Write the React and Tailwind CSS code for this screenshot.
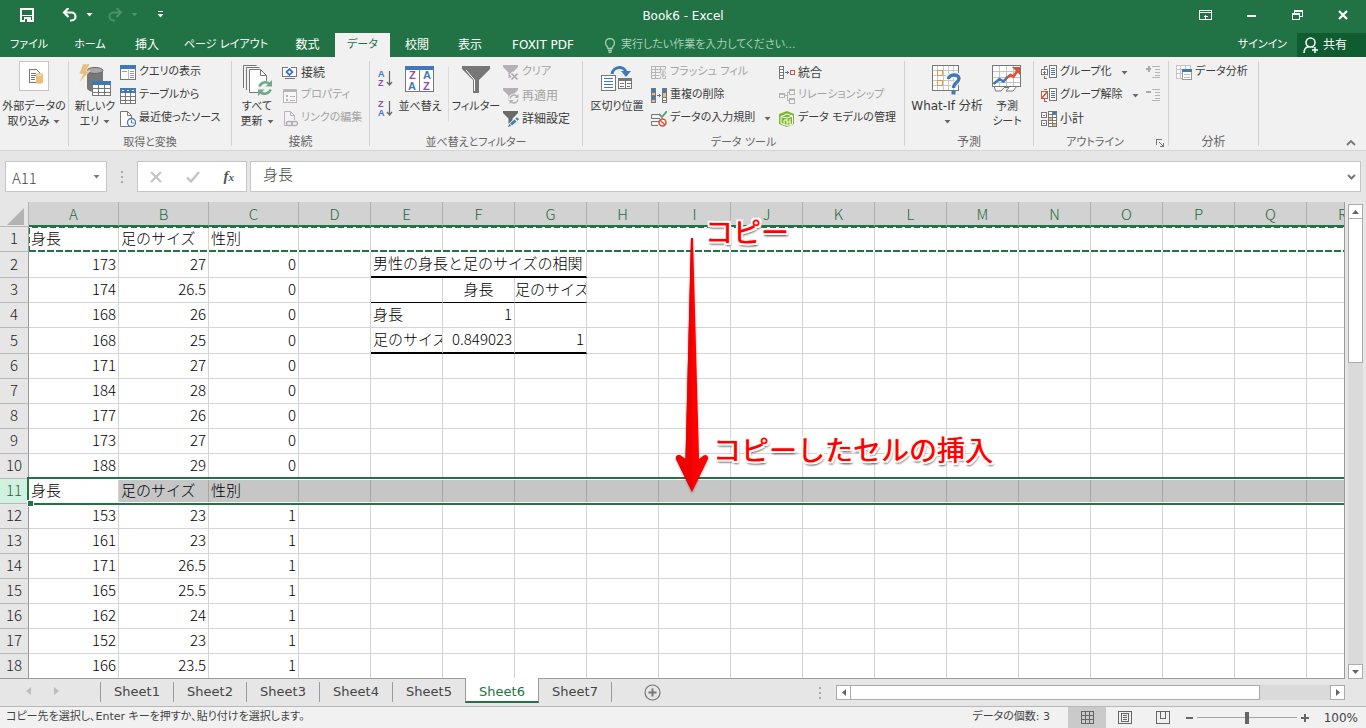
import React from "react";

const UI = "font-['DejaVu_Sans','Noto_Sans_CJK_JP',sans-serif] [font-feature-settings:'palt']";
const GRID = "font-['Noto_Sans_CJK_JP',sans-serif] [font-feature-settings:normal]";

const G = "#777777";
const B = "#4179b8";
const O = "#e9bd7b";
const P = "#8c4fb0";
const R = "#d9513a";

/* Labels with kana are set one step smaller than plain kanji or Latin ones. */
const sizeOf = (text) => (/[\u3041-\u30ff]/.test(text) ? "text-[11px]" : "text-xs");

function Svg({ w = 16, h = 16, crisp = true, children }) {
  return (
    <svg width={w} height={h} viewBox={`0 0 ${w} ${h}`} fill="none" shapeRendering={crisp ? "crispEdges" : "auto"} className="shrink-0" aria-hidden="true">
      {children}
    </svg>
  );
}

function Caret({ color = "#666666" }) {
  return (
    <svg width="7" height="4" viewBox="0 0 7 4" className="shrink-0" aria-hidden="true">
      <path d="M0.5 0h6L3.5 3.5z" fill={color} />
    </svg>
  );
}

/* ---------- ribbon icons ---------- */

const ExternalData = () => (
  <Svg w={30} h={30}>
    <path d="M0.5 0.5h29v29h-29z" fill="#fff" stroke="#c6c6c6" />
    <path d="M10.5 8.5h7l3 3v10h-10z" fill="#fff" stroke={G} />
    <path d="M12 12h5M12 14h5M12 16h4M12 18h4" stroke={G} transform="translate(0 .5)" />
    <g shapeRendering="auto">
      <path d="M17 14v7c0 1 1.600 1.800 3.500 1.800S24 22 24 21v-7z" fill={O} />
      <ellipse cx="20.500" cy="14" rx="3.500" ry="1.500" fill="#f4dcb4" stroke={O} />
    </g>
  </Svg>
);

const NewQuery = () => (
  <Svg w={34} h={33} crisp={false}>
    <path d="M9 6v18c0 2.200 3.500 4 8 4h8V6z" fill="#777" />
    <ellipse cx="17" cy="6.500" rx="8" ry="3" fill="#a9a9a9" stroke="#666" />
    <path d="M5 0h7L8 7h4L1 19l4-9H1z" fill={O} stroke="#f1f1f1" strokeWidth="0.600" />
    <g shapeRendering="crispEdges">
      <path d="M14.500 17.500h18v14h-18z" fill="#fff" stroke={G} />
      <path d="M14 17h19v4H14z" fill={B} />
      <path d="M14 24.500h19M14 28.500h19M20.500 21v10M26.500 21v10" stroke={G} />
    </g>
  </Svg>
);

const ShowQueries = () => (
  <Svg>
    <path d="M0.500 0.500h15v14h-15z" fill="#fff" stroke={G} />
    <path d="M0 0h16v4H0z" fill={B} />
    <path d="M10 6.500h4M10 8.500h4M10 10.500h4M10 12.500h4M2 6.500h5" stroke="#999" />
    <path d="M8.500 5v9" stroke="#bbb" />
  </Svg>
);

const FromTable = () => (
  <Svg>
    <path d="M0.500 0.500h15v15h-15z" fill="#fff" stroke={G} />
    <path d="M0 0h16v5H0z" fill={B} />
    <path d="M2 2.500h2M7 2.500h2M12 2.500h2" stroke="#fff" />
    <path d="M0 8.500h16M0 12.500h16M5.500 5v11M10.500 5v11" stroke={G} />
  </Svg>
);

const RecentSources = () => (
  <Svg crisp={false}>
    <path d="M0.500 0.500h7l4 4v11h-11z" fill="#fff" stroke={G} />
    <path d="M7.500 0.500v4h4" stroke={G} />
    <circle cx="11.500" cy="11.500" r="4" fill="#fff" stroke={B} strokeWidth="1.300" />
    <path d="M11.500 9v3h2.500" stroke={G} />
  </Svg>
);

const RefreshAll = () => (
  <Svg w={32} h={33} crisp={false}>
    <path d="M2.500 24V1.500h13M5.500 26V3.500h13" stroke={G} />
    <path d="M8.500 5.500h11l6 6v17h-17z" fill="#fff" stroke={G} />
    <path d="M19.500 5.500v6h6" stroke={G} />
    <circle cx="24" cy="24" r="7.500" fill="#f1f1f1" />
    <path d="M18.500 22.500a6 6 0 0 1 10-2.500M29.500 25.500a6 6 0 0 1-10 2.500" stroke="#6fa98a" strokeWidth="2.600" />
    <path d="M31 16v6.500h-6.500zM17 32v-6.500h6.500z" fill="#6fa98a" />
  </Svg>
);

const Connections = () => (
  <Svg>
    <path d="M0.500 2.500h14v9h-14z" fill="#fff" stroke={G} />
    <path d="M3 13.500h10" stroke={G} />
    <path d="M4 4l3.500-3 3.500 3v6H4z" fill="#fff" />
    <path d="M7.500 4l3 3-3 3-3-3z" stroke={B} strokeWidth="1.800" shapeRendering="auto" />
  </Svg>
);

const Properties = () => (
  <Svg>
    <path d="M1.500 1.500h13v13h-13z" fill="#f7f7f7" stroke="#b9b4ba" />
    <path d="M1 1h14v3H1z" fill="#b9b4ba" />
    <path d="M4 7h2v2H4zM4 11h2v2H4z" fill="#b9b4ba" />
    <path d="M8 8.500h5M8 12.500h5" stroke="#b9b4ba" />
  </Svg>
);

const EditLinks = () => (
  <Svg crisp={false}>
    <path d="M7 14.500H2.500v-14h6l4 4V9" fill="#f4f0f5" stroke="#b9b4ba" />
    <path d="M8.500 0.500v4h4" stroke="#b9b4ba" />
    <rect x="4.500" y="10.500" width="6" height="4" rx="2" stroke="#b0b0b0" strokeWidth="1.400" />
    <rect x="9.500" y="10.500" width="6" height="4" rx="2" stroke="#b0b0b0" strokeWidth="1.400" />
  </Svg>
);

function SortIcon({ top, bottom, topColor, bottomColor }) {
  return (
    <Svg w={16} h={18} crisp={false}>
      <g className="font-['Liberation_Sans',sans-serif] text-[9px] font-bold">
        <text x="0" y="8" fill={topColor}>{top}</text>
        <text x="0" y="17" fill={bottomColor}>{bottom}</text>
      </g>
      <path d="M11.500 2v14M9 13l2.500 3 2.500-3" stroke="#666" strokeWidth="1.200" />
    </Svg>
  );
}

const SortBig = () => (
  <Svg w={30} h={28}>
    <path d="M0.500 0.500h28v25h-28z" fill="#fff" stroke={G} />
    <path d="M0 0h29v4H0z" fill={B} />
    <path d="M14.500 4v22" stroke={G} />
    <g className="font-['Liberation_Sans',sans-serif] text-[11px] font-bold">
      <text x="4" y="13" fill={P}>Z</text>
      <text x="3" y="24" fill={B}>A</text>
      <text x="18" y="13" fill={B}>A</text>
      <text x="18" y="24" fill={P}>Z</text>
    </g>
  </Svg>
);

const Funnel = () => (
  <Svg w={28} h={28} crisp={false}>
    <path d="M0 0h28v3L17 14v13h-6V14L0 3z" fill={G} />
    <path d="M12.500 25V14L4 4" stroke="#fff" strokeWidth="1" />
  </Svg>
);

const SmallFunnel = ({ color }) => <path d="M0 0h15v2L9.500 7.500V13h-4V7.500L0 2z" fill={color} />;

const ClearFilter = () => (
  <Svg crisp={false}>
    <SmallFunnel color="#b5b0b5" />
    <path d="M8 8l7 7M15 8l-7 7" stroke="#f1f1f1" strokeWidth="4" />
    <path d="M8.500 8.500l6 6M14.500 8.500l-6 6" stroke="#aaa" strokeWidth="1.600" />
  </Svg>
);

const Reapply = () => (
  <Svg crisp={false}>
    <SmallFunnel color="#b5b0b5" />
    <circle cx="11" cy="11" r="5.500" fill="#f1f1f1" />
    <path d="M7 10.500a4 4 0 0 1 7-2M15 11.500a4 4 0 0 1-7 2" stroke="#b0b0b0" strokeWidth="1.500" />
    <path d="M15.500 6v4h-4zM6.500 16v-4h4z" fill="#b0b0b0" />
  </Svg>
);

const Advanced = () => (
  <Svg crisp={false}>
    <SmallFunnel color="#6a6a6a" />
    <path d="M5 16.500L15.500 7" stroke="#f1f1f1" strokeWidth="5" />
    <path d="M7 12.500l4.500-4 2 2-4.500 4z" fill={B} />
    <path d="M12.500 7.700l1.500-1.400 2 2-1.500 1.500z" fill={B} />
    <path d="M5 16l1.200-3 2 2z" fill={B} />
  </Svg>
);

const TextToColumns = () => (
  <Svg w={32} h={28} crisp={false}>
    <path d="M11 8c1-8 13-9 14-1" stroke={B} strokeWidth="3" />
    <path d="M20 5h10l-5 6z" fill={B} />
    <g shapeRendering="crispEdges">
      <path d="M0.500 9.500h14v15h-14z" fill="#fff" stroke={G} />
      <path d="M3 12.500h9M3 15.500h9M3 18.500h9M3 21.500h9" stroke={B} />
      <path d="M17.500 12.500h13v10h-13z" fill="#fff" stroke={G} />
      <path d="M17 12h14v3H17z" fill={G} />
      <path d="M24.500 12v11M19 17.500h4M19 20.500h4M26 17.500h4M26 20.500h3" stroke={G} />
    </g>
  </Svg>
);

const FlashFill = () => (
  <Svg>
    <path d="M0.500 1.500h14v12h-14zM0 4.500h15M0 7.500h15M0 10.500h15M4.500 1v13M9.500 1v13" stroke="#b5b5b5" />
    <path d="M11 5h4l-2 4h3l-7 7 2-5H9z" fill="#c4c4c4" stroke="#f1f1f1" shapeRendering="auto" />
  </Svg>
);

const RemoveDuplicates = () => (
  <Svg>
    <path d="M0.500 0.500h4v14h-4z" fill={O} stroke={G} />
    <path d="M1 1h3v3H1zM1 8h3v3H1z" fill={B} />
    <path d="M11.500 0.500h4v14h-4z" fill="#fff" stroke={G} />
    <path d="M12 1h3v4h-3z" fill={B} />
    <path d="M12 5h3v4h-3z" fill={O} />
    <path d="M11 9.500h5M11 12.500h5M0 4.500h5M0 7.500h5M0 11.500h5" stroke={G} />
    <path d="M6 7.500h4M8.500 6v3" stroke={B} />
  </Svg>
);

const Validation = () => (
  <Svg crisp={false}>
    <path d="M9 3.500H0.500v4H9M9 10.500H0.500v4H7" stroke={G} />
    <path d="M8 3l3 3 5-6" stroke="#5c9b79" strokeWidth="1.800" />
    <circle cx="11.500" cy="11.500" r="3.500" fill="#fff" stroke={R} strokeWidth="1.500" />
    <path d="M9 9l5 5" stroke={R} strokeWidth="1.400" />
  </Svg>
);

const Consolidate = () => (
  <Svg>
    <path d="M0.500 1.500h4v12h-4zM0 4.500h5M0 7.500h5M0 10.500h5" fill="#fff" stroke={G} />
    <path d="M6 7.500h4M8.500 6v3" stroke={B} />
    <path d="M11.500 5.500h4v4h-4z" fill="#fff" stroke={R} />
  </Svg>
);

const Relationships = () => (
  <Svg>
    <path d="M0.500 5.500h5v4h-5zM10.500 1.500h5v5h-5zM10.500 10.500h5v5h-5z" fill="#f5f5f5" stroke="#b5b5b5" />
    <path d="M10 1h6v2h-6zM10 10h6v2h-6zM0 5h6v2H0z" fill="#b5b5b5" />
    <path d="M6 7.500h2.500M10 4.500H8.500v8H10" stroke="#b5b5b5" />
  </Svg>
);

const DataModel = () => (
  <Svg crisp={false}>
    <path d="M0 3L8 0l7 3v10l-7 3-8-3z" fill="#7db72f" />
    <path d="M2 5.500L8 3l5.500 2v8l-5 1.500L2 12.500zM2 5.500L8 7l5.500-2M5 9v4M8 8v6M11 8v5M5 9h3M8 11h3" stroke="#fff" strokeWidth="1" />
  </Svg>
);

const WhatIf = () => (
  <Svg w={30} h={30} crisp={false}>
    <g shapeRendering="crispEdges">
      <path d="M0.500 0.500h26v25h-26z" fill="#fff" stroke={G} />
      <path d="M5.500 1v24M11.500 1v24M16.500 1v24M21.500 1v24M1 5.500h25M1 10.500h25M1 15.500h25M1 20.500h25" stroke="#c8c8c8" />
      <path d="M5.500 5.500h5v5h-5zM5.500 15.500h5v5h-5z" stroke="#df9a45" strokeWidth="1.500" fill="#fff" />
    </g>
    <path d="M16 13.500c0-4 11.500-5.500 11.500 0 0 4-5.500 3.500-5.500 9" stroke="#f1f1f1" strokeWidth="6" />
    <path d="M16.500 14c0-5 10.500-5.500 10.500-.5 0 4-5.500 4-5.500 9.500" stroke={B} strokeWidth="3.300" />
    <path d="M19.500 25.500h4v4h-4z" fill={B} />
  </Svg>
);

const Forecast = () => (
  <Svg w={30} h={30} crisp={false}>
    <path d="M2 20l1.500 6H9l3-3.500h5l-3 3.500h7l4-5" fill="#fff" stroke={G} />
    <g shapeRendering="crispEdges">
      <path d="M0.500 0.500h28v21h-28z" fill="#fff" stroke={G} />
      <path d="M7.500 1v20M14.500 1v20M21.500 1v20M1 6.500h27M1 12.500h27M1 17.500h27" stroke="#c4c4c4" />
    </g>
    <path d="M1.500 19l6-5 4 2.500 4-4.500" stroke={B} strokeWidth="2.600" />
    <path d="M14.500 13l4-3 3 1.500L26 5" stroke={R} strokeWidth="2.600" />
    <path d="M20 2h8v8z" fill={R} />
  </Svg>
);

const GroupIcon = () => (
  <Svg>
    <path d="M3 1.500h3M3.500 13.500H6M3.500 1v3M3.500 11v3" stroke={G} />
    <path d="M0.500 4.500h6v5h-6z" fill="#fff" stroke={G} />
    <path d="M2 7.500h3M3.500 6v3" stroke={G} />
    <path d="M8.500 0.500h7v12h-7z" fill="#fff" stroke={G} />
    <path d="M10 3.500h4M10 5.500h4M10 7.500h4M10 9.500h4" stroke={B} />
  </Svg>
);

const UngroupIcon = () => (
  <Svg>
    <path d="M3 1.500h3M3.500 13.500H6M3.500 11v3" stroke={G} />
    <path d="M0.500 3.500h6v7h-6z" fill="#fff" stroke={R} />
    <path d="M1 10l5-6" stroke={R} strokeWidth="1.500" shapeRendering="auto" />
    <path d="M8.500 0.500h7v12h-7z" fill="#fff" stroke={G} />
    <path d="M10 3.500h4M10 5.500h4M10 7.500h4M10 9.500h4" stroke={B} />
  </Svg>
);

const Subtotal = () => (
  <Svg>
    <path d="M0.500 1.500h5v5h-5zM0.500 9.500h5v5h-5z" fill="#fff" stroke={G} />
    <path d="M2 4.500h2M2 12.500h2" stroke={G} />
    <path d="M7.500 0.500h8v15h-8zM7 3.500h9M7 6.500h9M7 9.500h9M7 12.500h9M11.500 0v16" fill="#fff" stroke={G} />
    <path d="M8 7h3v2H8zM12 13h3v2h-3z" fill={O} />
    <path d="M12 1h3v2h-3z" fill={B} />
  </Svg>
);

const DetailIcon = ({ plus }) => (
  <Svg>
    <path d="M0 4h5" stroke="#aaa" strokeWidth="2" />
    {plus && <path d="M3 1v6" stroke="#aaa" strokeWidth="2" />}
    <path d="M6 1.500h8M9 4.500h5M9 7.500h5M9 10.500h5M6 12.500h8" stroke="#b5b5b5" />
  </Svg>
);

const Analysis = () => (
  <Svg>
    <path d="M0.500 0.500h14v13h-14zM0 4.500h15M0 8.500h7M4.500 0v14M9.500 0v5" fill="#fafafa" stroke="#c4c4c4" />
    <path d="M6.500 5.500h9v9h-9z" fill="#fff" stroke="#999" />
    <path d="M6 4h10v3H6z" fill={B} />
    <path d="M8 9.500h6M8 12.500h6" stroke="#bbb" />
  </Svg>
);

/* ---------- ribbon building blocks ---------- */

function Small({ icon, label, disabled, caret }) {
  return (
    <button type="button" disabled={disabled} className={`flex h-[23px] items-center gap-[3px] ${sizeOf(label)} ${disabled ? "text-[#a3a3a3]" : "text-[#3b3b3b]"}`}>
      {icon}
      <span>{label}</span>
      {caret && <span className="ml-1.5"><Caret /></span>}
    </button>
  );
}

function Big({ icon, lines, caret, width, align = "items-center" }) {
  return (
    <button type="button" className={`flex flex-col items-center text-[#3b3b3b] ${sizeOf(lines.join(""))} ${width}`}>
      <span className={`flex h-[38px] justify-center ${align}`}>{icon}</span>
      {lines.map((l, i) => (
        <span key={l} className="flex h-[15px] items-center gap-1 leading-[15px]">
          {l}
          {caret && i === lines.length - 1 && <Caret />}
        </span>
      ))}
    </button>
  );
}

function Group({ label = "", width, pad = "", children, launcher }) {
  return (
    <>
      <section className={`flex shrink-0 flex-col ${width}`}>
        <div className={`flex h-[74px] items-start ${pad}`}>{children}</div>
        <div className={`flex h-[15px] items-center justify-center text-[#666] ${sizeOf(label)}`}>
          <span className="flex-1 text-center leading-[15px]">{label}</span>
          {launcher}
        </div>
      </section>
      <div className="h-[85px] w-px shrink-0 bg-[#d2d2d2]" />
    </>
  );
}

function Ribbon() {
  return (
    <div className="flex h-[94px] shrink-0 items-start overflow-hidden border-b border-[#d5d5d5] bg-[#f1f1f1] pt-1 text-xs whitespace-nowrap">
      <Group width="w-[68px]">
        <Big width="w-full" align="items-start" icon={<ExternalData />} lines={["外部データの", "取り込み"]} caret />
      </Group>
      <Group label="取得と変換" width="w-[162px]" pad="pl-1 gap-[3px]">
        <Big width="w-11" icon={<NewQuery />} lines={["新しいク", "エリ"]} caret />
        <div>
          <Small icon={<ShowQueries />} label="クエリの表示" />
          <Small icon={<FromTable />} label="テーブルから" />
          <Small icon={<RecentSources />} label="最近使ったソース" />
        </div>
      </Group>
      <Group label="接続" width="w-[137px]" pad="pl-[3px] gap-[3px]">
        <Big width="w-11" icon={<RefreshAll />} lines={["すべて", "更新"]} caret />
        <div>
          <Small icon={<Connections />} label="接続" />
          <Small icon={<Properties />} label="プロパティ" disabled />
          <Small icon={<EditLinks />} label="リンクの編集" disabled />
        </div>
      </Group>
      <Group label="並べ替えとフィルター" width="w-[212px]" pad="pl-2">
        <div className="flex flex-col gap-3 pt-2">
          <button type="button" aria-label="昇順"><SortIcon top="A" bottom="Z" topColor={B} bottomColor={P} /></button>
          <button type="button" aria-label="降順"><SortIcon top="Z" bottom="A" topColor={P} bottomColor={B} /></button>
        </div>
        <Big width="w-[52px]" icon={<SortBig />} lines={["並べ替え"]} />
        <div className="mt-1.5 ml-0.5 h-[55px] w-px bg-[#dcdcdc]" />
        <Big width="w-[54px]" icon={<Funnel />} lines={["フィルター"]} />
        <div>
          <Small icon={<ClearFilter />} label="クリア" disabled />
          <Small icon={<Reapply />} label="再適用" disabled />
          <Small icon={<Advanced />} label="詳細設定" />
        </div>
      </Group>
      <Group label="データ ツール" width="w-[321px]" pad="pl-0.5 gap-0.5">
        <Big width="w-16" icon={<TextToColumns />} lines={["区切り位置"]} />
        <div className="w-[126px]">
          <Small icon={<FlashFill />} label="フラッシュ フィル" disabled />
          <Small icon={<RemoveDuplicates />} label="重複の削除" />
          <Small icon={<Validation />} label="データの入力規則" caret />
        </div>
        <div>
          <Small icon={<Consolidate />} label="統合" />
          <Small icon={<Relationships />} label="リレーションシップ" disabled />
          <Small icon={<DataModel />} label="データ モデルの管理" />
        </div>
      </Group>
      <Group label="予測" width="w-[128px]" pad="pl-0.5">
        <button type="button" className="flex w-20 flex-col items-center text-[#3b3b3b]">
          <span className="flex h-[38px] items-center"><WhatIf /></span>
          <span className="h-[15px] leading-[15px]">What-If 分析</span>
          <span className="flex h-[15px] items-center"><Caret /></span>
        </button>
        <Big width="w-10" icon={<Forecast />} lines={["予測", "シート"]} />
      </Group>
      <Group
        label="アウトライン"
        width="w-[134px]"
        pad="pl-[7px]"
        launcher={
          <button type="button" aria-label="アウトラインの設定" className="mr-1">
            <Svg w={8} h={8}><path d="M0.500 6V0.500H6M3 3l4 4M7.500 3.500v4h-4" stroke={G} /></Svg>
          </button>
        }
      >
        <div className="w-[105px]">
          <Small icon={<GroupIcon />} label="グループ化" caret />
          <Small icon={<UngroupIcon />} label="グループ解除" caret />
          <Small icon={<Subtotal />} label="小計" />
        </div>
        <div>
          <button type="button" aria-label="詳細データの表示" className="flex h-[23px] items-center"><DetailIcon plus /></button>
          <button type="button" aria-label="詳細を表示しない" className="flex h-[23px] items-center"><DetailIcon /></button>
        </div>
      </Group>
      <Group label="分析" width="w-[89px]" pad="pl-[7px]">
        <Small icon={<Analysis />} label="データ分析" />
      </Group>
      <button type="button" aria-label="リボンを折りたたむ" className="mr-2.5 ml-auto self-end pb-1">
        <Svg w={10} h={6} crisp={false}><path d="M1 5l4-4 4 4" stroke={G} strokeWidth="1.800" /></Svg>
      </button>
    </div>
  );
}

/* ---------- title and tabs ---------- */

function TitleBar() {
  const win = "flex w-[46px] items-center justify-center";
  return (
    <div className="relative flex h-[33px] shrink-0 items-stretch justify-between text-white">
      <div className="flex items-center pb-1 pl-5">
        <button type="button" aria-label="上書き保存" className="w-[42px]">
          <Svg w={14} h={14}>
            <path d="M1 1h12v12H1z" stroke="#fff" strokeWidth="2" />
            <path d="M1 7.500h12M4 9h6v4H4z" stroke="#fff" fill="#fff" />
            <path d="M5 11h2v3H5z" fill="#217346" />
          </Svg>
        </button>
        <button type="button" aria-label="元に戻す" className="flex w-[45px] items-center gap-2">
          <Svg w={16} h={14} crisp={false}>
            <path d="M3 4.500h6.500a4 4 0 0 1 0 8H8" stroke="#fff" strokeWidth="2.200" />
            <path d="M6.500 0L2 4.500 6.500 9" stroke="#fff" strokeWidth="2.200" />
          </Svg>
          <Caret color="#fff" />
        </button>
        <button type="button" aria-label="やり直し" disabled className="flex w-[50px] items-center gap-2">
          <Svg w={16} h={14} crisp={false}>
            <path d="M13 4.500H6.500a4 4 0 0 0 0 8H8M9.500 0L14 4.500 9.500 9" stroke="#4f9068" strokeWidth="2" />
          </Svg>
          <Caret color="#4f9068" />
        </button>
        <button type="button" aria-label="クイック アクセス ツール バーのカスタマイズ">
          <Svg w={7} h={7} crisp={false}><path d="M1 .5h5" stroke="#fff" /><path d="M0.500 3h6l-3 3.500z" fill="#fff" /></Svg>
        </button>
      </div>
      <h1 className="absolute inset-x-0 top-2 text-center text-xs leading-4">Book6 - Excel</h1>
      <div className="flex pb-1">
        <button type="button" aria-label="リボンの表示オプション" className={win}>
          <Svg w={13} h={10}><path d="M0.500 0.500h12v9h-12zM0 2.500h13M6.500 9V5M4.500 6.500h4" stroke="#fff" /></Svg>
        </button>
        <button type="button" aria-label="最小化" className={win}>
          <Svg w={9} h={10}><path d="M0 6h9" stroke="#fff" strokeWidth="2" /></Svg>
        </button>
        <button type="button" aria-label="元に戻す (縮小)" className={win}>
          <Svg w={11} h={10}><path d="M2.500 3V0.500h8v6H8M0.500 4.500h7v5h-7zM0 3.500h8M2 1.500h9" stroke="#fff" /></Svg>
        </button>
        <button type="button" aria-label="閉じる" className={win}>
          <Svg w={10} h={10} crisp={false}><path d="M1 1l8 8M9 1l-8 8" stroke="#fff" strokeWidth="2.200" /></Svg>
        </button>
      </div>
    </div>
  );
}

const TABS = [
  ["ファイル", "w-[58px]"],
  ["ホーム", "w-16"],
  ["挿入", "w-[50px]"],
  ["ページ レイアウト", "w-[108px]"],
  ["数式", "w-[55px]"],
  ["データ", "w-[55px]"],
  ["校閲", "w-[54px]"],
  ["表示", "w-[52px]"],
  ["FOXIT PDF", "w-[94px]"],
];

function TabBar() {
  return (
    <nav className="flex h-6 shrink-0 items-stretch text-xs whitespace-nowrap text-white">
      {TABS.map(([t, w]) => (
        <button key={t} type="button" className={`${w} ${sizeOf(t)} ${t === "データ" ? "bg-[#f1f1f1] text-[#217346]" : ""}`}>
          {t}
        </button>
      ))}
      <label className="flex items-center gap-[5px] pl-3.5 text-[#a9cfb9]">
        <Svg w={12} h={15} crisp={false}>
          <path d="M4 10.500C4 8.500 1.500 7.500 1.500 5a4.500 4.500 0 0 1 9 0c0 2.500-2.500 3.500-2.500 5.500zM4 12.500h4M4.500 14.500h3" stroke="#a9cfb9" strokeWidth="1.300" />
        </Svg>
        <input aria-label="操作アシスト" placeholder="実行したい作業を入力してください..." className="w-52 bg-transparent text-[11px] outline-none placeholder:text-[#a9cfb9]" />
      </label>
      <button type="button" className="mr-2.5 ml-auto text-[11px]">サインイン</button>
      <button type="button" className="flex w-[69px] items-center gap-1 bg-[#0e5c2f] pl-1.5">
        <Svg w={16} h={16} crisp={false}>
          <circle cx="7.500" cy="5.500" r="4.500" stroke="#fff" strokeWidth="1.500" />
          <path d="M1 16c0-4 2-6 5-6.500M9 9.500l1.500 1M12 10v6M9 13h6" stroke="#fff" strokeWidth="1.500" />
        </Svg>
        共有
      </button>
    </nav>
  );
}

/* ---------- formula bar ---------- */

const Dots = () => (
  <Svg w={2} h={12}><path d="M0 0h2v2H0zM0 5h2v2H0zM0 10h2v2H0z" fill="#aaa" /></Svg>
);

function FormulaBar() {
  return (
    <div className="flex h-[51px] shrink-0 items-start px-[5px] pt-2.5 text-[#444]">
      <div className="flex h-[31px] w-[102px] items-center border border-[#c6c6c6] bg-white pr-1.5">
        <input aria-label="名前ボックス" defaultValue="A11" className={`w-0 flex-1 pt-1 pl-1.5 text-[15px] font-light outline-none ${GRID}`} />
        <button type="button" aria-label="名前の一覧"><Caret color="#777" /></button>
      </div>
      <div className="flex h-[31px] w-[30px] items-center justify-center"><Dots /></div>
      <div className="mr-[3px] flex h-[31px] w-[110px] items-center justify-around border border-[#c6c6c6] bg-white">
        <button type="button" aria-label="キャンセル" disabled>
          <Svg w={12} h={12} crisp={false}><path d="M1 1l10 10M11 1L1 11" stroke="#c4c4c4" strokeWidth="2" /></Svg>
        </button>
        <button type="button" aria-label="入力" disabled>
          <Svg w={14} h={12} crisp={false}><path d="M1 6.500l4 4L13 1" stroke="#c4c4c4" strokeWidth="2.400" /></Svg>
        </button>
        <button type="button" aria-label="関数の挿入" className="font-['Liberation_Serif',serif] text-[15px] leading-4 font-bold text-[#555] italic">
          f<span className="text-[11px]">x</span>
        </button>
      </div>
      <div className="flex h-[31px] flex-1 items-center border border-[#c6c6c6] bg-white pr-1">
        <input aria-label="数式バー" defaultValue="身長" className={`w-0 flex-1 pb-1 pl-3 text-[15px] font-light outline-none ${GRID}`} />
        <button type="button" aria-label="数式バーの展開">
          <Svg w={9} h={6} crisp={false}><path d="M1 1l3.500 3.500L8 1" stroke={G} strokeWidth="2" /></Svg>
        </button>
      </div>
    </div>
  );
}

/* ---------- sheet ---------- */

const COLS = "ABCDEFGHIJKLMNOPQR".split("");
const ROWS = [
  ["身長", "足のサイズ", "性別"],
  ["173", "27", "0"],
  ["174", "26.5", "0"],
  ["168", "26", "0"],
  ["168", "25", "0"],
  ["171", "27", "0"],
  ["184", "28", "0"],
  ["177", "26", "0"],
  ["173", "27", "0"],
  ["188", "29", "0"],
  ["身長", "足のサイズ", "性別"],
  ["153", "23", "1"],
  ["161", "23", "1"],
  ["171", "26.5", "1"],
  ["165", "25.5", "1"],
  ["162", "24", "1"],
  ["152", "23", "1"],
  ["166", "23.5", "1"],
];

const THICK = "border-b-2 border-b-black";
const THIN = "border-b border-b-black";
const EXTRA = {
  2: { E: { text: "男性の身長と足のサイズの相関", span: 3, cls: THICK }, F: null, G: null },
  3: { E: { cls: THIN }, F: { text: "身長", cls: `${THIN} text-center` }, G: { text: "足のサイズ", cls: THIN, pad: "px-0" } },
  4: { E: { text: "身長" }, F: { text: "1", cls: "text-right" } },
  5: { E: { text: "足のサイズ", cls: THICK }, F: { text: "0.849023", cls: `${THICK} text-right` }, G: { text: "1", cls: `${THICK} text-right` } },
};

function Cell({ row, col, index }) {
  const extra = EXTRA[row]?.[col];
  if (extra === null) return null;
  const selected = row === 11 && index > 0;
  const text = index < 3 ? ROWS[row - 1][index] : extra?.text;
  const numeric = index < 3 && row !== 1 && row !== 11;
  return (
    <td
      colSpan={extra?.span}
      className={`overflow-hidden border-r pb-0.5 leading-[22px] font-light whitespace-nowrap ${extra?.pad ?? "px-0.5"} ${
        selected ? "border-[#a6a6a6] bg-[#c6c6c6]" : "border-[#d4d4d4] bg-white"
      } ${extra?.cls?.includes("border-b") ? "" : "border-b"} ${numeric ? "text-right" : ""} ${extra?.cls ?? ""}`}
    >
      {text}
    </td>
  );
}

function Sheet() {
  return (
    <div className={`relative min-w-0 flex-1 overflow-hidden border-r border-b border-[#9b9b9b] text-[15px] text-black ${GRID}`}>
      <table className="w-[1379px] table-fixed border-separate border-spacing-0">
        <colgroup>
          <col className="w-[29px]" />
          {COLS.map((c, i) => <col key={c} className={i < 3 ? "w-[90px]" : "w-[72px]"} />)}
        </colgroup>
        <thead>
          <tr className="h-[25px]">
            <th className="border-r border-b border-[#b5b5b5] bg-[#e6e6e6] p-0" aria-label="すべて選択">
              <span className="flex justify-end pt-1 pr-1">
                <Svg w={17} h={17} crisp={false}><path d="M17 0v17H0z" fill="#b3b3b3" /></Svg>
              </span>
            </th>
            {COLS.map((c) => (
              <th key={c} className="border-r border-b-2 border-r-[#b0b0b0] border-b-[#217346] bg-[#d2d2d2] p-0 leading-[22px] font-light text-[#1f6a41]">
                {c}
              </th>
            ))}
          </tr>
        </thead>
        <tbody>
          {ROWS.map((_, r) => {
            const n = r + 1;
            return (
              <tr key={n} className={n === 2 || n === 5 ? "h-[26px]" : "h-[25px]"}>
                <th className={`border-r border-b border-r-[#9b9b9b] border-b-[#b8b8b8] p-0 pb-0.5 leading-[22px] font-light ${n === 11 ? "bg-[#d2f0e0] text-[#1f6a41]" : "bg-[#e6e6e6] text-[#222]"}`}>
                  {n}
                </th>
                {COLS.map((c, i) => <Cell key={c} row={n} col={c} index={i} />)}
              </tr>
            );
          })}
        </tbody>
      </table>

      {/* copy marquee around row 1 */}
      <div className="pointer-events-none absolute top-[25px] right-0 left-[29px] h-[25px]">
        <div className="h-px bg-[repeating-linear-gradient(90deg,#fff_0_3px,#217346_3px_9px)]" />
        <div className="h-[22px] w-px bg-[repeating-linear-gradient(180deg,#217346_0_6px,#fff_6px_9px)]" />
        <div className="h-0.5 bg-[repeating-linear-gradient(90deg,#217346_0_7px,#fff_7px_9px)]" />
      </div>

      {/* selected row outline and fill handle */}
      <div className="pointer-events-none absolute top-[275px] -right-1 left-[27px] h-7 border-2 border-[#217346]">
        <div className="h-full border-y border-white" />
        <div className="absolute -bottom-[3px] -left-px h-[5px] w-[5px] bg-[#217346] outline outline-white" />
      </div>

      {/* annotations */}
      <svg width="40" height="260" viewBox="0 0 40 260" className="pointer-events-none absolute top-[34px] left-[672px] drop-shadow-[0_1px_1px_rgba(0,0,0,0.35)]" aria-hidden="true">
        <path d="M19 2h2l6 221 4.500-3.500c3-2 6 1.500 4 4.500L20 256 4.500 224c-2-3 1-6.500 4-4.500L13.500 223z" fill="#ff0000" />
        <path d="M19 2h1v254L4.500 224c-2-3 1-6.500 4-4.500L13.500 223z" fill="#ee0000" />
      </svg>
      <Note className="top-[9px] left-[705px]">コピー</Note>
      <Note className="top-[227px] left-[713px]">コピーしたセルの挿入</Note>
    </div>
  );
}

function Note({ className, children }) {
  return (
    <p
      className={`pointer-events-none absolute text-[28px] leading-10 font-normal whitespace-nowrap text-[#ff0000] [text-shadow:0_0_1px_#ff0000,2px_0_#fff,-2px_0_#fff,0_2px_#fff,0_-2px_#fff,2px_2px_#fff,-2px_2px_#fff,2px_-2px_#fff,-2px_-2px_#fff,0_3px_2px_#777,2px_3px_2px_#777] ${className}`}
    >
      {children}
    </p>
  );
}

const scrollButton = "flex h-[15px] w-[15px] shrink-0 items-center justify-center border border-[#ababab] bg-white";

function VerticalScroll() {
  return (
    <div className="flex w-[21px] shrink-0 flex-col pt-0.5 pl-[3px]">
      <button type="button" aria-label="上へ" className={scrollButton}>
        <Svg w={7} h={4} crisp={false}><path d="M0 4h7L3.500 0z" fill="#666" /></Svg>
      </button>
      <div className="-mt-px flex w-[15px] flex-1 flex-col bg-[#dadada]">
        <div className="h-[32.5%] border border-[#ababab] bg-white" />
      </div>
      <button type="button" aria-label="下へ" className={scrollButton}>
        <Svg w={7} h={4} crisp={false}><path d="M0 0h7L3.500 4z" fill="#666" /></Svg>
      </button>
    </div>
  );
}

const SHEETS = ["Sheet1", "Sheet2", "Sheet3", "Sheet4", "Sheet5", "Sheet6", "Sheet7"];

function SheetTabs() {
  return (
    <div className="flex h-[27px] shrink-0 items-start text-[13px] text-[#444]">
      <div className="flex w-[100px] gap-[23px] pt-2 pl-[26px]">
        <button type="button" aria-label="前のシート"><Svg w={5} h={8} crisp={false}><path d="M5 0v8L0 4z" fill="#bdbdbd" /></Svg></button>
        <button type="button" aria-label="次のシート"><Svg w={5} h={8} crisp={false}><path d="M0 0v8l5-4z" fill="#bdbdbd" /></Svg></button>
      </div>
      {SHEETS.map((s) =>
        s === "Sheet6" ? (
          <button key={s} type="button" className="relative z-10 -mt-px h-[25px] w-[74px] border-x border-b-2 border-x-[#9b9b9b] border-b-[#217346] bg-white pt-1 leading-[19px] text-[#217346]">
            {s}
          </button>
        ) : (
          <button key={s} type="button" className={`mt-[3px] h-5 w-[73px] leading-5 ${s === "Sheet7" ? "border-r border-[#9b9b9b]" : "border-l border-[#9b9b9b]"}`}>
            {s}
          </button>
        )
      )}
      <button type="button" aria-label="新しいシート" className="mt-[5px] ml-8">
        <Svg w={17} h={17} crisp={false}>
          <circle cx="8.500" cy="8.500" r="7.500" stroke={G} strokeWidth="1.200" />
          <path d="M4.500 8.500h8M8.500 4.500v8" stroke={G} strokeWidth="2" />
        </Svg>
      </button>
      <div className="mt-1.5 mr-[21px] ml-auto flex w-[526px] items-center">
        <div className="flex w-[17px] shrink-0"><Dots /></div>
        <button type="button" aria-label="左へ" className={scrollButton}>
          <Svg w={4} h={7} crisp={false}><path d="M4 0v7L0 3.500z" fill="#666" /></Svg>
        </button>
        <div className="-ml-px flex h-[15px] flex-1 bg-[#dadada]">
          <div className="w-[85.5%] border border-[#ababab] bg-white" />
        </div>
        <button type="button" aria-label="右へ" className={scrollButton}>
          <Svg w={4} h={7} crisp={false}><path d="M0 0v7l4-3.500z" fill="#666" /></Svg>
        </button>
      </div>
    </div>
  );
}

function StatusBar() {
  return (
    <footer className="flex h-[22px] shrink-0 items-center border-t border-[#b8b8b8] bg-[#f1f1f1] pl-1.5 text-[11px] whitespace-nowrap text-[#444]">
      <span>コピー先を選択し、Enter キーを押すか、貼り付けを選択します。</span>
      <span className="mr-[18px] ml-auto">データの個数: 3</span>
      <button type="button" aria-label="標準" className="flex h-full w-[38px] items-center justify-center bg-[#cacaca]">
        <Svg w={13} h={13}><path d="M0.500 0.500h12v12h-12zM0 4.500h13M0 8.500h13M4.500 0v13M8.500 0v13" stroke="#666" /></Svg>
      </button>
      <button type="button" aria-label="ページ レイアウト" className="flex h-full w-[38px] items-center justify-center">
        <Svg w={14} h={13}><path d="M0.500 0.500h13v12h-13zM3.500 2.500h7v8h-7zM5 4.500h4M5 6.500h4M5 8.500h4" stroke="#666" /></Svg>
      </button>
      <button type="button" aria-label="改ページ プレビュー" className="flex h-full w-[38px] items-center justify-center">
        <Svg w={14} h={13}><path d="M0.500 0.500h13v12h-13zM4.500 0v7.500h5V0" stroke="#666" /></Svg>
      </button>
      <button type="button" aria-label="縮小" className="ml-1"><Svg w={7} h={8}><path d="M0 4h7" stroke="#666" strokeWidth="2" /></Svg></button>
      <input
        type="range"
        aria-label="ズーム"
        defaultValue="50"
        className="mx-1 h-3 w-[100px] appearance-none bg-[linear-gradient(#a6a6a6,#a6a6a6)] bg-[length:100%_1px] bg-center bg-no-repeat [&::-webkit-slider-thumb]:h-3 [&::-webkit-slider-thumb]:w-1 [&::-webkit-slider-thumb]:appearance-none [&::-webkit-slider-thumb]:bg-[#666]"
      />
      <button type="button" aria-label="拡大"><Svg w={8} h={8}><path d="M0 4h8M4 0v8" stroke="#666" strokeWidth="2" /></Svg></button>
      <span className="w-[57px] pr-2 text-right text-xs">100%</span>
    </footer>
  );
}

export default function App() {
  return (
    <div className={`flex h-screen flex-col overflow-hidden bg-[#e6e6e6] ${UI}`}>
      <header className="shrink-0 bg-[#217346]">
        <TitleBar />
        <TabBar />
      </header>
      <Ribbon />
      <FormulaBar />
      <main className="flex min-h-0 flex-1">
        <Sheet />
        <VerticalScroll />
      </main>
      <SheetTabs />
      <StatusBar />
    </div>
  );
}
